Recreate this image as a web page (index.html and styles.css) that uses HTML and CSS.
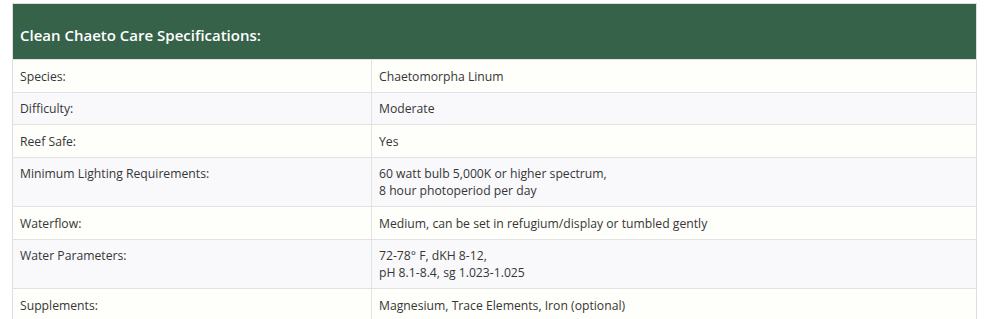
FILE: index.html
```html
<!DOCTYPE html>
<html>
<head>
<meta charset="utf-8">
<link rel="stylesheet" href="styles.css">
</head>
<body>
<div class="wrap">
  <table class="specs">
    <thead>
      <tr><th colspan="2" class="title">Clean Chaeto Care Specifications:</th></tr>
    </thead>
    <tbody>
      <tr class="odd"><td class="label">Species:</td><td>Chaetomorpha Linum</td></tr>
      <tr class="even"><td class="label">Difficulty:</td><td>Moderate</td></tr>
      <tr class="odd"><td class="label">Reef Safe:</td><td>Yes</td></tr>
      <tr class="even"><td class="label">Minimum Lighting Requirements:</td><td>60 watt bulb 5,000K or higher spectrum,<br>8 hour photoperiod per day</td></tr>
      <tr class="odd"><td class="label">Waterflow:</td><td>Medium, can be set in refugium/display or tumbled gently</td></tr>
      <tr class="even"><td class="label">Water Parameters:</td><td>72-78° F, dKH 8-12,<br>pH 8.1-8.4, sg 1.023-1.025</td></tr>
      <tr class="odd"><td class="label">Supplements:</td><td>Magnesium, Trace Elements, Iron (optional)</td></tr>
    </tbody>
  </table>
</div>
</body>
</html>
```
FILE: styles.css
```css
html, body {
  margin: 0;
  padding: 0;
  background: #ffffff;
}
.wrap {
  padding: 3px 13px 0 12px;
}
.specs {
  width: 965px;
  border-collapse: collapse;
  border: 1px solid #dedede;
  font-family: "Open Sans", "Liberation Sans", sans-serif;
  font-size: 12.2px;
  color: #363636;
}
.title {
  background: #356249;
  color: #ffffff;
  text-align: left;
  font-size: 15px;
  font-weight: 600;
  line-height: 22px;
  padding: 20px 7px 13px;
}
.specs td {
  padding: 7.5px 7px 7px;
  line-height: 17px;
  vertical-align: top;
  border-top: 1px solid #e2e2e2;
  text-align: left;
}
.specs td.label {
  width: 344px;
  border-right: 1px solid #e2e2e2;
}
.odd { background: #fefefa; }
.even { background: #f9f9fb; }
```
